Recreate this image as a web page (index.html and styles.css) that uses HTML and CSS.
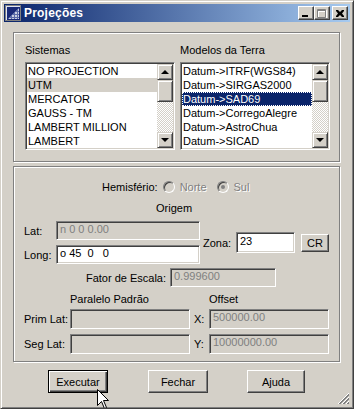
FILE: index.html
```html
<!DOCTYPE html>
<html lang="pt">
<head>
  <meta charset="UTF-8" />
  <title>Projeções</title>
  <link rel="stylesheet" href="styles.css">
</head>
<body>
  <div class="window">

    <div class="titlebar">
      <svg class="app-icon" width="16" height="16" viewBox="0 0 16 16">
        <rect x="0" y="0" width="16" height="16" fill="#808080"/>
        <rect x="1" y="1" width="14" height="14" fill="#1a2a78"/>
        <path d="M1 1.5h14M1.5 1v14" stroke="#dfe4f4"/>
        <polygon points="3,14 14,3 14,14" fill="#c8cde0"/>
        <path d="M3 14L14 3M6.5 14V10.5M9.5 14V7.5M12.5 14V4.5M4.5 12.5H14M7.5 9.5H14M10.5 6.5H14" stroke="#5a6aa8" stroke-width="1"/>
      </svg>
      <span class="title">Projeções</span>
      <div class="title-buttons">
        <span class="tbtn">
          <svg width="8" height="7" viewBox="0 0 8 7"><rect x="0" y="5" width="6" height="2" fill="#000"/></svg>
        </span>
        <span class="tbtn">
          <svg width="10" height="9" viewBox="0 0 10 9">
            <path d="M1.5 1.5h8v8h-8z M1.5 2.5h8" stroke="#fff" fill="none"/>
            <path d="M0.5 0.5h8v8h-8z M0.5 1.5h8" stroke="#808080" fill="none"/>
          </svg>
        </span>
        <span class="tbtn close">
          <svg width="8" height="7" viewBox="0 0 8 7">
            <path d="M0 0h2l2 2 2-2h2v1l-2 2.5 2 2.5v1h-2l-2-2-2 2h-2v-1l2-2.5-2-2.5z" fill="#000"/>
          </svg>
        </span>
      </div>
    </div>

    <div class="content">

      <!-- Sistemas / Modelos -->
      <div class="group group-lists">
        <div class="col">
          <div class="label">Sistemas</div>
          <div class="listbox">
            <ul class="items">
              <li>NO PROJECTION</li>
              <li class="selected-dim">UTM</li>
              <li>MERCATOR</li>
              <li>GAUSS - TM</li>
              <li>LAMBERT MILLION</li>
              <li>LAMBERT</li>
            </ul>
            <div class="scrollbar">
              <span class="sb-btn"><span class="arrow up"></span></span>
              <span class="sb-thumb"></span>
              <span class="sb-track"></span>
              <span class="sb-btn"><span class="arrow down"></span></span>
            </div>
          </div>
        </div>
        <div class="col">
          <div class="label">Modelos da Terra</div>
          <div class="listbox">
            <ul class="items">
              <li>Datum-&gt;ITRF(WGS84)</li>
              <li>Datum-&gt;SIRGAS2000</li>
              <li class="selected">Datum-&gt;SAD69</li>
              <li>Datum-&gt;CorregoAlegre</li>
              <li>Datum-&gt;AstroChua</li>
              <li>Datum-&gt;SICAD</li>
            </ul>
            <div class="scrollbar">
              <span class="sb-btn"><span class="arrow up"></span></span>
              <span class="sb-thumb"></span>
              <span class="sb-track"></span>
              <span class="sb-btn"><span class="arrow down"></span></span>
            </div>
          </div>
        </div>
      </div>

      <!-- Parametros -->
      <div class="group group-params">
        <div class="row hemisphere">
          <span>Hemisfério:</span>
          <span class="radio"></span>
          <span class="disabled-text">Norte</span>
          <span class="radio checked"></span>
          <span class="disabled-text">Sul</span>
        </div>

        <div class="row caption origem">Origem</div>

        <div class="row coords">
          <div class="coord-col">
            <div class="field-row">
              <span class="lbl lbl-coord">Lat:</span>
              <span class="input disabled w-coord">n 0 0 0.00</span>
            </div>
            <div class="field-row">
              <span class="lbl lbl-coord">Long:</span>
              <span class="input w-coord">o 45  0   0</span>
            </div>
          </div>
          <span class="lbl lbl-zona">Zona:</span>
          <span class="input zona">23</span>
          <span class="btn small">CR</span>
        </div>

        <div class="row fator">
          <span class="lbl lbl-fator">Fator de Escala:</span>
          <span class="input disabled w-fator">0.999600</span>
        </div>

        <div class="row caption captions2">
          <span class="cap-paralelo">Paralelo Padrão</span>
          <span>Offset</span>
        </div>

        <div class="row field-row pair">
          <span class="lbl lbl-par">Prim Lat:</span>
          <span class="input disabled w-par"></span>
          <span class="lbl lbl-xy">X:</span>
          <span class="input disabled w-par">500000.00</span>
        </div>

        <div class="row field-row pair second">
          <span class="lbl lbl-par">Seg Lat:</span>
          <span class="input disabled w-par"></span>
          <span class="lbl lbl-xy">Y:</span>
          <span class="input disabled w-par">10000000.00</span>
        </div>
      </div>

      <div class="actions">
        <span class="btn default b-exec">Executar</span>
        <span class="btn b-fechar">Fechar</span>
        <span class="btn b-ajuda">Ajuda</span>
      </div>
    </div>

    <svg class="grip" width="12" height="12" viewBox="0 0 12 12">
      <path d="M11 0L0 11M11 4L4 11M11 8L8 11" stroke="#fff"/>
      <path d="M11 1L1 11M11 2L2 11M11 5L5 11M11 6L6 11M11 9L9 11M11 10L10 11" stroke="#808080"/>
    </svg>

    <svg class="cursor" width="13" height="21" viewBox="0 0 13 21">
      <path d="M0.5 0.5V16.5L4.5 12.5L7.5 19.5L9.5 18.5L6.5 11.5H11.5Z" fill="#fff" stroke="#000"/>
    </svg>
  </div>
</body>
</html>
```

FILE: styles.css
```css
/* Base */
body {
  margin: 0;
  background: #d4d0c8;
  font-family: "Liberation Sans", Arial, sans-serif;
  font-size: 11px;
  color: #000;
}

.window {
  position: relative;
  width: 354px;
  height: 409px;
  box-sizing: border-box;
  padding: 3px;
  background: #d4d0c8;
  border: 1px solid;
  border-color: #d4d0c8 #404040 #404040 #d4d0c8;
  box-shadow: inset 1px 1px 0 #fff, inset -1px -1px 0 #808080;
  overflow: hidden;
}

/* Title bar */
.titlebar {
  height: 18px;
  display: flex;
  align-items: center;
  padding: 0 2px 0 0;
  background: linear-gradient(to right, #0a246a, #a6caf0);
  color: #fff;
}

.app-icon {
  margin-left: 1px;
  flex: none;
}

.title {
  margin-left: 3px;
  font-weight: bold;
  font-size: 12px;
  letter-spacing: 0.2px;
}

.title-buttons {
  margin-left: auto;
  display: flex;
}

.tbtn {
  width: 16px;
  height: 14px;
  box-sizing: border-box;
  display: flex;
  align-items: center;
  justify-content: center;
  background: #d4d0c8;
  border: 1px solid;
  border-color: #fff #404040 #404040 #fff;
  box-shadow: inset -1px -1px 0 #808080;
}

.tbtn.close {
  margin-left: 2px;
}

/* Group boxes */
.group {
  box-sizing: border-box;
  width: 327px;
  margin-left: 9px;
  border: 1px solid #808080;
  box-shadow: inset 1px 1px 0 #fff, 1px 1px 0 #fff;
}

.group-lists {
  margin-top: 10px;
  height: 130px;
  padding: 11px 0 0 11px;
  display: flex;
  gap: 5px;
}

.col {
  width: 150px;
}

.label {
  line-height: 13px;
  margin-bottom: 5px;
}

/* List boxes */
.listbox {
  box-sizing: border-box;
  width: 150px;
  height: 88px;
  display: flex;
  padding: 1px;
  background: #fff;
  border: 1px solid;
  border-color: #808080 #fff #fff #808080;
  box-shadow: inset 1px 1px 0 #404040, inset -1px -1px 0 #d4d0c8;
}

.items {
  flex: 1;
  margin: 0;
  padding: 0;
  list-style: none;
  overflow: hidden;
}

.items li {
  height: 14px;
  line-height: 14px;
  padding-left: 1px;
  white-space: nowrap;
}

.items li.selected-dim {
  background: #d4d0c8;
}

.items li.selected {
  background: #0a246a;
  color: #fff;
  outline: 1px dotted #fff;
  outline-offset: -1px;
}

.scrollbar {
  width: 16px;
  display: flex;
  flex-direction: column;
}

.sb-btn,
.sb-thumb {
  box-sizing: border-box;
  width: 16px;
  background: #d4d0c8;
  border: 1px solid;
  border-color: #d4d0c8 #404040 #404040 #d4d0c8;
  box-shadow: inset 1px 1px 0 #fff, inset -1px -1px 0 #808080;
}

.sb-btn {
  height: 16px;
  display: flex;
  align-items: center;
  justify-content: center;
}

.sb-thumb {
  height: 22px;
}

.sb-track {
  flex: 1;
  background: repeating-conic-gradient(#fff 0 25%, #d4d0c8 0 50%) 0 0 / 2px 2px;
}

.arrow {
  width: 0;
  height: 0;
  border-left: 4px solid transparent;
  border-right: 4px solid transparent;
}

.arrow.up {
  border-bottom: 4px solid #000;
  margin-top: -1px;
}

.arrow.down {
  border-top: 4px solid #000;
}

/* Parameters */
.group-params {
  margin-top: 4px;
  height: 196px;
  padding-top: 13px;
}

.row {
  display: flex;
  align-items: center;
}

.hemisphere {
  height: 14px;
  margin-left: 88px;
}

.radio {
  box-sizing: border-box;
  width: 12px;
  height: 12px;
  border-radius: 50%;
  margin-left: 5px;
  margin-right: 5px;
  background: #d4d0c8;
  border: 1px solid;
  border-color: #808080 #fff #fff #808080;
  box-shadow: inset 1px 1px 0 #404040, inset -1px -1px 0 #d4d0c8;
  position: relative;
}

.radio.checked {
  margin-left: 10px;
}

.radio.checked::after {
  content: "";
  position: absolute;
  left: 3px;
  top: 3px;
  width: 4px;
  height: 4px;
  border-radius: 50%;
  background: #808080;
}

.disabled-text {
  color: #808080;
  text-shadow: 1px 1px 0 #fff;
}

.caption {
  height: 14px;
}

.origem {
  margin-top: 7px;
  margin-left: 142px;
}

.coords {
  margin-top: 6px;
  margin-left: 10px;
}

.coord-col {
  display: flex;
  flex-direction: column;
  gap: 5px;
}

.field-row {
  display: flex;
  align-items: center;
}

.lbl {
  white-space: nowrap;
}

.lbl-coord {
  width: 32px;
}

.input {
  box-sizing: border-box;
  height: 19px;
  line-height: 15px;
  padding: 0 3px;
  background: #fff;
  border: 1px solid;
  border-color: #808080 #fff #fff #808080;
  box-shadow: inset 1px 1px 0 #404040, inset -1px -1px 0 #d4d0c8;
  white-space: pre;
  overflow: hidden;
}

.input.disabled {
  background: #d4d0c8;
  color: #808080;
}

.w-coord {
  width: 144px;
}

.lbl-zona {
  width: 33px;
  margin-left: 3px;
}

.input.zona {
  width: 59px;
  height: 21px;
  line-height: 17px;
}

/* Buttons */
.btn {
  box-sizing: border-box;
  display: flex;
  align-items: center;
  justify-content: center;
  width: 60px;
  height: 23px;
  background: #d4d0c8;
  border: 1px solid;
  border-color: #fff #404040 #404040 #fff;
  box-shadow: inset -1px -1px 0 #808080, inset 1px 1px 0 #d4d0c8;
}

.btn.small {
  width: 28px;
  height: 18px;
  margin-left: 6px;
}

.btn.default {
  border-color: #000;
  box-shadow: inset 1px 1px 0 #fff, inset -1px -1px 0 #404040, inset -2px -2px 0 #808080;
}

.fator {
  margin-top: 4px;
}

.lbl-fator {
  width: 152px;
  text-align: right;
  margin-right: 4px;
}

.w-fator {
  width: 106px;
}

.captions2 {
  margin-top: 5px;
  margin-left: 56px;
}

.cap-paralelo {
  width: 139px;
}

.pair {
  margin-top: 3px;
  margin-left: 10px;
}

.pair.second {
  margin-top: 5px;
}

.pair .input {
  height: 20px;
}

.lbl-par {
  width: 46px;
}

.w-par {
  width: 120px;
}

.lbl-xy {
  width: 15px;
  margin-left: 4px;
}

.actions {
  display: flex;
  margin-top: 8px;
}

.b-exec {
  margin-left: 44px;
}

.b-fechar {
  margin-left: 40px;
}

.b-ajuda {
  margin-left: 39px;
  width: 58px;
}

/* Overlays */
.grip {
  position: absolute;
  right: 3px;
  bottom: 3px;
}

.cursor {
  position: absolute;
  left: 96px;
  top: 388px;
}
```
